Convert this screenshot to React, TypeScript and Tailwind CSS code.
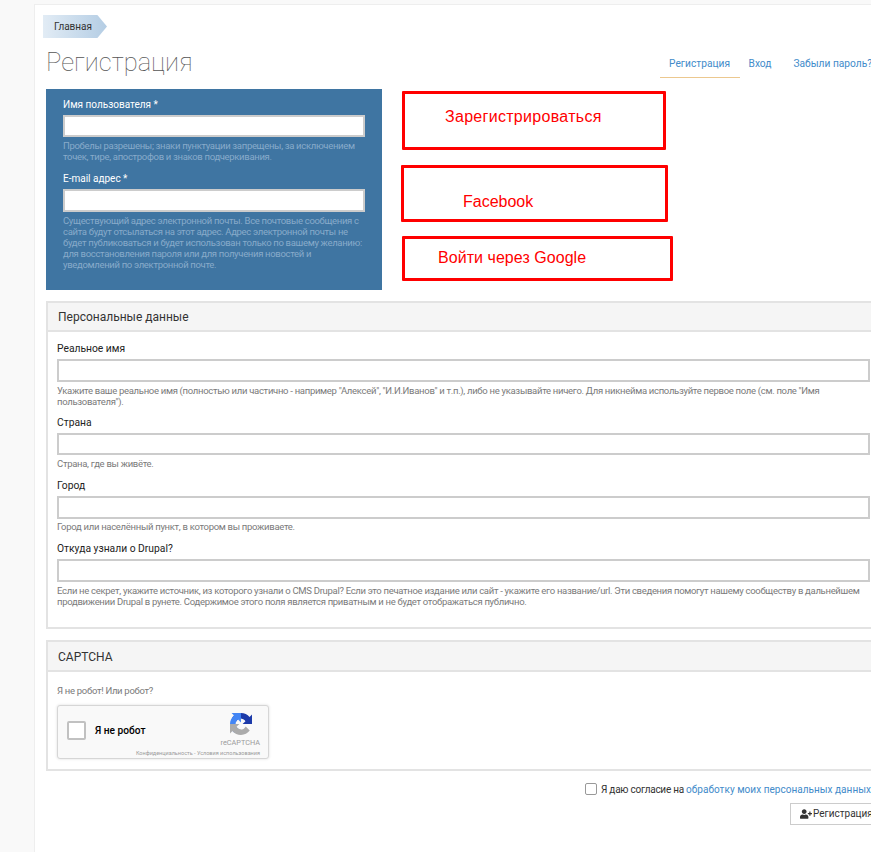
import React from "react";
import { FaUserPlus } from "react-icons/fa";

interface FieldProps {
  label: string;
  help: React.ReactNode;
  className?: string;
  inputClass?: string;
  helpClass?: string;
}

const Field = ({ label, help, className, inputClass = "h-[23px]", helpClass = "mt-[3px]" }: FieldProps) => {
  return (
    <div className={className}>
      <label className="block h-[14px] text-[10.3px] leading-[16px] text-[#222]">{label}</label>
      <input type="text" className={`mt-[4px] block w-full border-2 border-[#ccc] bg-white ${inputClass}`} />
      <div className={`text-[9.5px] leading-[11px] tracking-[-0.3px] text-[#7a7a7a] ${helpClass}`}>{help}</div>
    </div>
  );
};

const RedBox = ({ children, className }: { children: React.ReactNode; className: string }) => {
  return <div className={`rounded-[1px] border-[3px] border-[#f00] font-['Liberation_Sans'] text-[16px] leading-[18px] text-[#f00] ${className}`}>{children}</div>;
};

const RecaptchaLogo = () => (
  <svg viewBox="0 0 64 64" className="h-[22px] w-[22px]">
    <path d="M64 31.955l-.033-1.37V4.687l-7.16 7.16C50.948 4.674 42.033.093 32.05.093c-10.4 0-19.622 4.96-25.458 12.64l11.736 11.86a15.55 15.55 0 0 1 4.754-5.334c2.05-1.6 4.952-2.906 8.968-2.906.485 0 .86.057 1.135.163 4.976.393 9.288 3.14 11.828 7.124l-8.307 8.307L63.97 31.96" fill="#1c3aa9" />
    <path d="M31.862.094l-1.37.033H4.594l7.16 7.16C4.58 13.147 0 22.06 0 32.046c0 10.4 4.96 19.622 12.64 25.458L24.5 45.768a15.55 15.55 0 0 1-5.334-4.754c-1.6-2.05-2.906-4.952-2.906-8.968 0-.485.057-.86.163-1.135.393-4.976 3.14-9.288 7.124-11.828l8.307 8.307L31.867.094" fill="#4285f4" />
    <path d="M.001 32.045l.033 1.37v25.898l7.16-7.16c5.86 7.173 14.774 11.754 24.76 11.754 10.4 0 19.622-4.96 25.458-12.64l-11.736-11.86a15.55 15.55 0 0 1-4.754 5.334c-2.05 1.6-4.952 2.906-8.968 2.906-.485 0-.86-.057-1.135-.163-4.976-.393-9.288-3.14-11.828-7.124l8.307-8.307c-10.522.04-22.4.066-27.295-.005" fill="#ababab" />
  </svg>
);

export default function App() {
  return (
    <div className="h-[852px] w-[871px] overflow-hidden bg-[#f9f9f9] pt-[4px] pl-[34px] font-['Roboto',sans-serif]">
      <div className="h-[900px] w-[900px] border-t border-l border-[#eee] bg-white pt-[10px] pl-[8px]">
        <div className="flex h-[23px] w-[64px] items-center bg-gradient-to-r from-[#e2ecf5] to-[#b4cde4] pl-[11px] text-[10px] text-[#333] [clip-path:polygon(0_0,85%_0,100%_50%,85%_100%,0_100%)]">
          Главная
        </div>

        <div className="mt-[8px] flex h-[32px] w-[829px] items-end justify-between pl-[3px]">
          <h1 className="text-[25.5px] leading-[32px] font-thin text-[#555]">Регистрация</h1>
          <div className="flex text-[10.2px] leading-[26px] text-[#428bca]">
            <a className="w-[80px] border-b border-[#ecc88f] pt-[4px] text-center">Регистрация</a>
            <a className="ml-[9px] pt-[4px]">Вход</a>
            <a className="ml-[22px] pt-[4px] whitespace-nowrap">Забыли пароль?</a>
          </div>
        </div>

        <div className="mt-[11px] ml-[3px] flex">
          <div className="h-[201px] w-[336px] bg-[#3f75a2] px-[17px] pt-[8px]">
            <label className="block h-[14px] text-[10px] leading-[16px] text-white">Имя пользователя *</label>
            <input type="text" className="mt-[4px] block h-[22px] w-[302px] border-2 border-[#ccc] bg-white" />
            <p className="mt-[3px] text-[9.5px] leading-[11px] tracking-[-0.32px] text-[#88abca]">
              Пробелы разрешены; знаки пунктуации запрещены, за исключением точек, тире, апострофов и знаков подчеркивания.
            </p>
            <label className="mt-[9px] block h-[14px] text-[10px] leading-[16px] text-white">E-mail адрес *</label>
            <input type="text" className="mt-[4px] block h-[23px] w-[302px] border-2 border-[#ccc] bg-white" />
            <p className="mt-[3px] text-[9.5px] leading-[11px] tracking-[-0.32px] text-[#88abca]">
              Существующий адрес электронной почты. Все почтовые сообщения с сайта будут отсылаться на этот адрес. Адрес электронной почты не будет публиковаться и будет использован только по вашему желанию: для восстановления пароля или для получения новостей и уведомлений по электронной почте.
            </p>
          </div>

          <div className="ml-[20px] flex flex-col pt-[2px]">
            <RedBox className="h-[59px] w-[264px] pt-[14px] pl-[40px] tracking-[0.3px]">Зарегистрироваться</RedBox>
            <RedBox className="mt-[15px] -ml-px h-[57px] w-[267px] pt-[25px] pl-[59px]">Facebook</RedBox>
            <RedBox className="mt-[14px] h-[45px] w-[271px] pt-[10px] pl-[33px] tracking-[0.05px]">Войти через Google</RedBox>
          </div>
        </div>

        <fieldset className="mt-[11px] ml-[3px] h-[328px] w-[860px] border-2 border-[#e3e3e3]">
          <div className="h-[29px] border-b-2 border-[#e3e3e3] bg-[#f5f5f5] pl-[10px] text-[12px] leading-[29px] text-[#333]">Персональные данные</div>
          <div className="ml-[9px] w-[813px] pt-[9px]">
            <Field
              label="Реальное имя"
              help='Укажите ваше реальное имя (полностью или частично - например "Алексей", "И.И.Иванов" и т.п.), либо не указывайте ничего. Для никнейма используйте первое поле (см. поле "Имя пользователя").'
            />
            <Field className="mt-[8px]" inputClass="h-[22px]" label="Страна" help="Страна, где вы живёте." />
            <Field className="mt-[9px]" helpClass="mt-[2px]" label="Город" help="Город или населённый пункт, в котором вы проживаете." />
            <Field
              className="mt-[9px]"
              label="Откуда узнали о Drupal?"
              help="Если не секрет, укажите источник, из которого узнали о CMS Drupal? Если это печатное издание или сайт - укажите его название/url. Эти сведения помогут нашему сообществу в дальнейшем продвижении Drupal в рунете. Содержимое этого поля является приватным и не будет отображаться публично."
            />
          </div>
        </fieldset>

        <fieldset className="mt-[11px] ml-[3px] h-[131px] w-[860px] border-2 border-[#e3e3e3]">
          <div className="h-[30px] border-b-2 border-[#e3e3e3] bg-[#f5f5f5] pl-[10px] text-[12px] leading-[30px] text-[#333]">CAPTCHA</div>
          <p className="mt-[13px] ml-[9px] text-[9.5px] leading-[12px] tracking-[-0.3px] text-[#7a7a7a]">Я не робот! Или робот?</p>
          <div className="mt-[8px] ml-[9px] flex h-[54px] w-[212px] rounded-[3px] border border-[#d6d6d6] bg-[#f9f9f9] shadow-[0_0_3px_#ddd]">
            <div className="flex w-[77px] shrink-0">
              <div className="mt-[15px] ml-[9px] h-[19px] w-[19px] shrink-0 rounded-[2px] border-2 border-[#c1c1c1] bg-white"></div>
              <div className="mt-[18px] ml-[9px] text-[10.2px] leading-[14px] font-medium whitespace-nowrap text-black">Я не робот</div>
            </div>
            <div className="ml-auto flex w-[132px] shrink-0 flex-col items-end pr-[8px]">
              <div className="mt-[7px] mr-[8px]"><RecaptchaLogo /></div>
              <div className="mt-[3px] text-[7.3px] leading-[10px] text-[#9b9b9b]">reCAPTCHA</div>
              <div className="mt-[1px] text-[5.5px] leading-[8px] whitespace-nowrap text-[#9b9b9b]">Конфиденциальность - Условия использования</div>
            </div>
          </div>
        </fieldset>

        <div className="mt-[11px] flex h-[14px] items-center pl-[542px] text-[10px] whitespace-nowrap text-[#333]">
          <input type="checkbox" className="h-[12px] w-[12px] appearance-none rounded-[2px] border border-[#999] bg-white" />
          <span className="ml-[4px]"><span className="tracking-[-0.25px]">Я даю согласие на </span><a className="tracking-[0.03px] text-[#428bca]">обработку моих персональных данных</a></span>
        </div>

        <button className="mt-[7px] ml-[747px] flex h-[22px] w-[110px] items-center border border-[#ccc] bg-white pb-px pl-[9px] text-[10px] text-[#333]">
          <FaUserPlus className="mr-[1px] h-[12px] w-[12px]" />
          Регистрация
        </button>
      </div>
    </div>
  );
}
